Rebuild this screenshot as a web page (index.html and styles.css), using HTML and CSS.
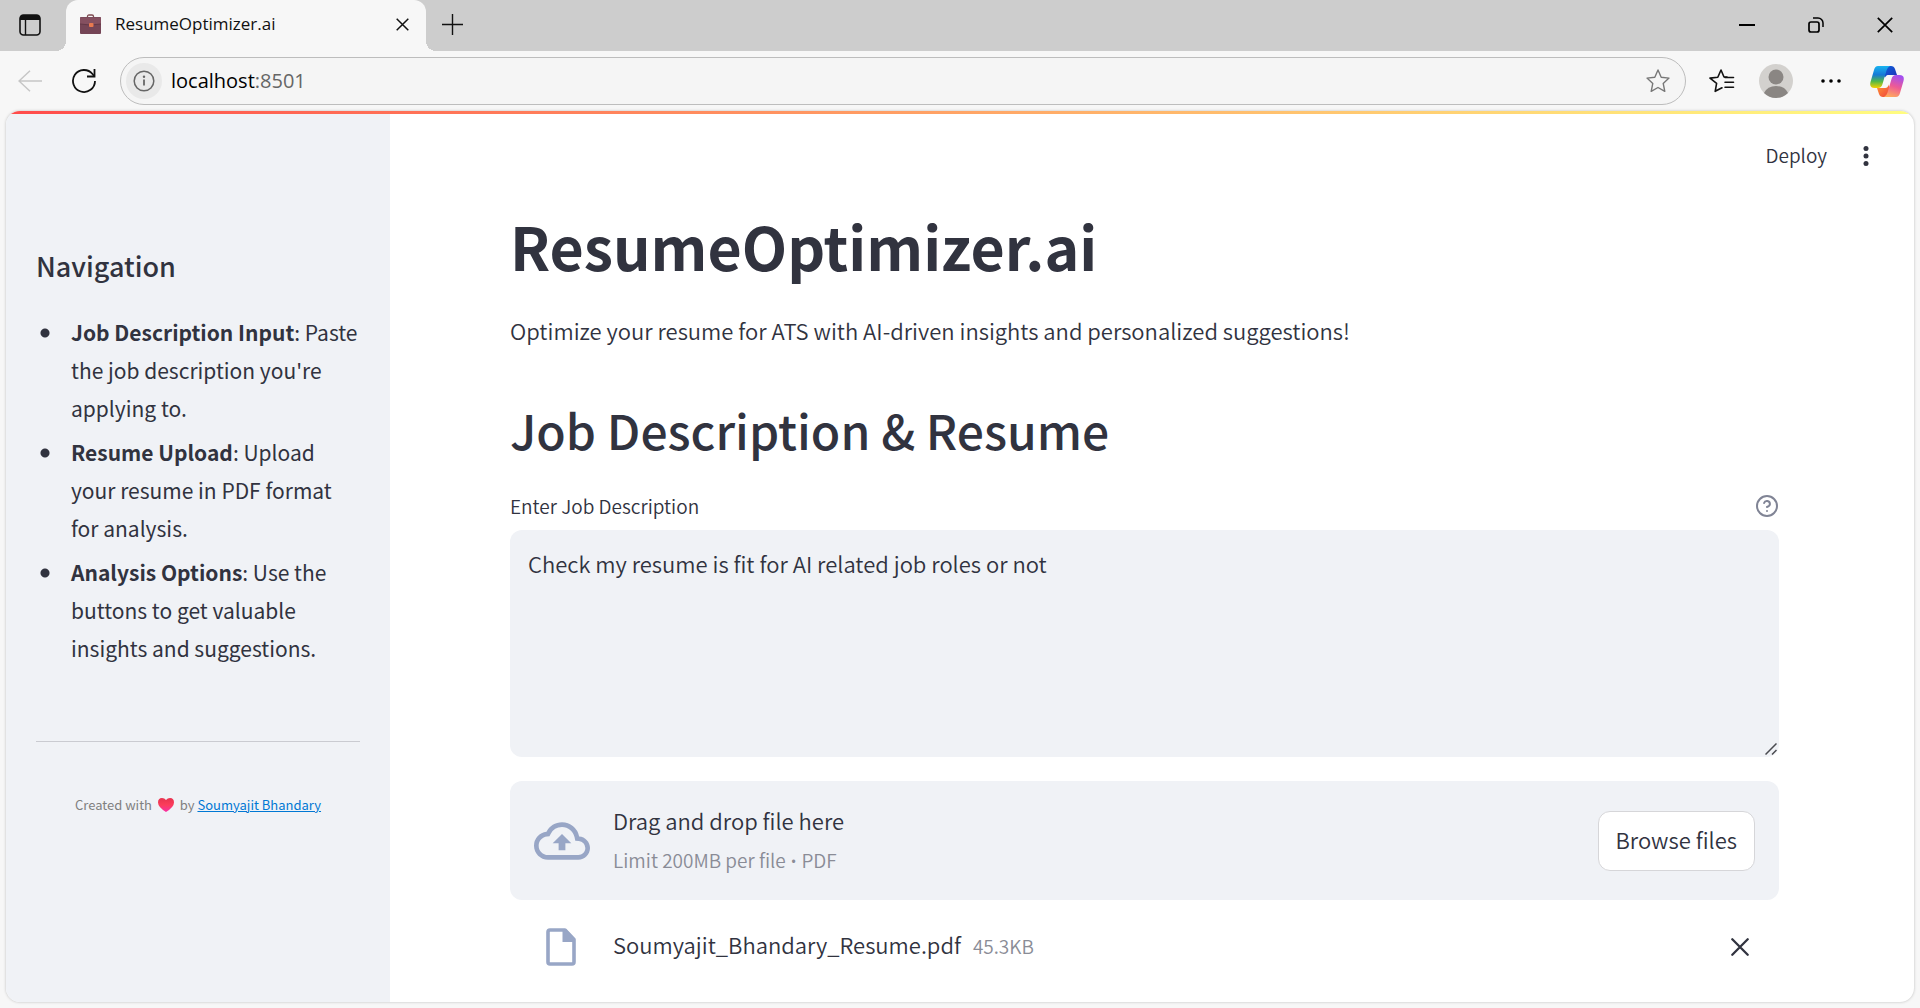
FILE: index.html
```html
<!DOCTYPE html>
<html lang="en">
<head>
<meta charset="utf-8">
<title>ResumeOptimizer.ai</title>
<link rel="stylesheet" href="styles.css">
</head>
<body>
<div class="browser">
  <div class="tabstrip">
    <button class="chrome-btn tab-actions" aria-label="Tab actions">
      <svg width="22" height="22" viewBox="0 0 22 22"><rect x="1" y="1" width="20" height="20" rx="3.5" fill="none" stroke="#111" stroke-width="1.6"/><path d="M1 6V4a3 3 0 0 1 3-3h14a3 3 0 0 1 3 3v2z" fill="#111"/><path d="M6.5 6v15" stroke="#111" stroke-width="1.4"/></svg>
    </button>
    <div class="tab">
      <svg class="favicon" width="21" height="20" viewBox="0 0 21 20"><path d="M7.500 4V2.500q0-1.500 1.500-1.500h3q1.500 0 1.500 1.500V4" fill="none" stroke="#7d4a50" stroke-width="1.300"/><rect y="3" width="21" height="17" rx="1" fill="#754556"/><path d="M0 3.500h21v6.500q-10 2-21 0z" fill="#855060"/><path d="M0 10q10.500 2 21 0" fill="none" stroke="#633847"/><rect x="9" y="9" width="4.500" height="4" rx="1" fill="#e87a50"/></svg>
      <span class="tab-title">ResumeOptimizer.ai</span>
      <button class="chrome-btn" aria-label="Close tab">
        <svg width="13" height="13" viewBox="0 0 13 13"><path d="M.7.7l11.600 11.600M12.300.7L.7 12.300" stroke="#111" stroke-width="1.500"/></svg>
      </button>
    </div>
    <button class="chrome-btn new-tab" aria-label="New tab">
      <svg width="21" height="21" viewBox="0 0 21 21"><path d="M10.500 0v21M0 10.500h21" stroke="#111" stroke-width="1.400"/></svg>
    </button>
    <div class="window-controls">
      <button class="chrome-btn" aria-label="Minimize"><svg width="16" height="16" viewBox="0 0 16 16"><path d="M0 8h16" stroke="#000" stroke-width="2"/></svg></button>
      <button class="chrome-btn" aria-label="Restore"><svg width="16" height="16" viewBox="0 0 16 16" fill="none" stroke="#000" stroke-width="1.700"><rect x="1" y="5" width="10" height="10" rx="2"/><path d="M5 1h5a5 5 0 0 1 5 5v4" stroke-width="1.500"/></svg></button>
      <button class="chrome-btn" aria-label="Close"><svg width="16" height="16" viewBox="0 0 16 16"><path d="M.8.8l14.400 14.400M15.200.8L.8 15.200" stroke="#000" stroke-width="1.700"/></svg></button>
    </div>
  </div>

  <div class="toolbar">
    <button class="chrome-btn" aria-label="Back"><svg width="24" height="22" viewBox="0 0 24 22" fill="none" stroke="#c6c6c6" stroke-width="1.500"><path d="M24 11H1M12 .7L1 11l11 10.300"/></svg></button>
    <button class="chrome-btn reload" aria-label="Reload"><svg width="24" height="24" viewBox="0 0 24 24" fill="none" stroke="#111" stroke-width="1.800"><path d="M23 12A11 11 0 1 1 20.500 5L22.500 7.500"/><path d="M22.500 0v7.500H15"/></svg></button>
    <div class="address">
      <button class="chrome-btn site-info" aria-label="Site information"><svg width="22" height="22" viewBox="0 0 22 22"><circle cx="11" cy="11" r="9.800" fill="none" stroke="#666" stroke-width="1.500"/><path d="M11 9.500v6" stroke="#666" stroke-width="1.800"/><circle cx="11" cy="6.800" r="1.200" fill="#666"/></svg></button>
      <span class="url">localhost<span class="port">:8501</span></span>
      <button class="chrome-btn" aria-label="Add to favorites"><svg width="24" height="24" viewBox="0 0 24 24" fill="none" stroke="#777" stroke-width="1.400" stroke-linejoin="round"><path d="M12 1l3.200 7.200 7.800.9-5.800 5.300 1.600 7.900L12 18.500l-6.800 3.800 1.600-7.900L1 9.100l7.800-.9z"/></svg></button>
    </div>
    <button class="chrome-btn favorites" aria-label="Favorites"><svg width="26" height="24" viewBox="0 0 26 24" fill="none" stroke="#111" stroke-width="1.600" stroke-linejoin="round" stroke-linecap="round"><path d="M13 18.800l-6.800 3.500 1.400-7.900L1 9.100l7.800-.9L12 1l3 7h3"/><path d="M16 8.500h8.500M16 13.300h8.500M16 18.200h8.500"/></svg></button>
    <button class="chrome-btn profile" aria-label="Profile"><svg width="34" height="34" viewBox="0 0 34 34"><circle cx="17" cy="17" r="17" fill="#d3d1ce"/><circle cx="17" cy="13" r="7.500" fill="#8a8683"/><path d="M5 29q3.500-7 12-7t12 7a17 17 0 0 1-24 0z" fill="#8a8683"/></svg></button>
    <button class="chrome-btn more" aria-label="Settings and more"><svg width="20" height="4" viewBox="0 0 20 4"><circle cx="2" cy="2" r="1.800"/><circle cx="10" cy="2" r="1.800"/><circle cx="18" cy="2" r="1.800"/></svg></button>
    <button class="chrome-btn copilot" aria-label="Copilot">
      <svg width="34" height="31" viewBox="0 0 34 31">
        <defs>
          <linearGradient id="cool" x1="0" y1="0" x2="0" y2="1"><stop offset="0" stop-color="#19b4f0"/><stop offset=".4" stop-color="#1578d6"/><stop offset=".7" stop-color="#52b848"/><stop offset="1" stop-color="#f5d000"/></linearGradient>
          <linearGradient id="warm" x1="0.600" y1="0" x2="0.300" y2="1"><stop offset="0" stop-color="#a34ff0"/><stop offset=".5" stop-color="#ee5a95"/><stop offset="1" stop-color="#ffab5c"/></linearGradient>
          <linearGradient id="blue" x1="0" y1="0" x2="1" y2="1"><stop offset="0" stop-color="#0d62dc"/><stop offset="1" stop-color="#1f2fb5"/></linearGradient>
          <linearGradient id="red" x1="0" y1="0" x2="1" y2="1"><stop offset="0" stop-color="#ff9a35"/><stop offset="1" stop-color="#f0413d"/></linearGradient>
        </defs>
        <path d="M17 0h4q3 0 4 3l2 6h-4q-4 0-5 3.500l-4-2z" fill="url(#blue)"/>
        <path d="M7 22h6q4 0 5-4l2 4-3 9h-4q-3 0-4-3z" fill="url(#red)"/>
        <path d="M8 0h12q-2.500 1-3.500 4.500L12.500 18q-1 4-4.500 4H4.500q-5.500 0-4-6L4 4q1-4 4-4z" fill="url(#cool)"/>
        <path d="M26 31H14q2.500-1 3.500-4.500L21.500 13q1-4 4.500-4h3.500q5.500 0 4 6L30 27q-1 4-4 4z" fill="url(#warm)"/>
        <path d="M17.500 9h5q-1.500 1.500-2 4l-2.300 7q-.7 2-3 2h-4q1.500-1 2-3.500L15 12q.5-2.500 2.500-3z" fill="#f7f7f7"/>
      </svg>
    </button>
  </div>

  <div class="page">
    <div class="decoration"></div>
    <aside class="sidebar">
      <h2 class="nav-title">Navigation</h2>
      <ul class="nav-list">
        <li><strong>Job Description Input</strong>: Paste the job description you're applying to.</li>
        <li><strong>Resume Upload</strong>: Upload your resume in PDF format for analysis.</li>
        <li><strong>Analysis Options</strong>: Use the buttons to get valuable insights and suggestions.</li>
      </ul>
      <hr class="divider">
      <p class="credit">Created with <svg class="heart" width="16" height="14" viewBox="0 0 16 14"><defs><linearGradient id="heart" x1="0" y1="0" x2="0" y2="1"><stop offset="0" stop-color="#e8334f"/><stop offset=".5" stop-color="#fb3d5b"/><stop offset="1" stop-color="#f92fa8"/></linearGradient></defs><path d="M8 14Q0 9 0 4.500 0 0 4 0q2.500 0 4 2 1.500-2 4-2 4 0 4 4.500Q16 9 8 14z" fill="url(#heart)"/></svg> by <a href="#">Soumyajit Bhandary</a></p>
    </aside>

    <main class="main">
      <header class="app-header">
        <button class="deploy">Deploy</button>
        <button class="chrome-btn" aria-label="Main menu"><svg width="6" height="20" viewBox="0 0 6 20" fill="#31333f"><circle cx="3" cy="2.600" r="2.500"/><circle cx="3" cy="10" r="2.500"/><circle cx="3" cy="17.400" r="2.500"/></svg></button>
      </header>
      <div class="content">
        <h1 class="title">ResumeOptimizer.ai</h1>
        <p class="intro">Optimize your resume for ATS with AI-driven insights and personalized suggestions!</p>
        <h2 class="section-title">Job Description &amp; Resume</h2>
        <div class="label-row">
          <label for="job">Enter Job Description</label>
          <button class="chrome-btn" aria-label="Help"><svg width="24" height="24" viewBox="0 0 24 24" fill="none" stroke="#808495" stroke-width="2" stroke-linecap="round" stroke-linejoin="round"><circle cx="12" cy="12" r="10"/><path d="M9.090 9a3 3 0 0 1 5.830 1c0 2-3 3-3 3"/><path d="M12 17h.01"/></svg></button>
        </div>
        <div class="job-field">
          <textarea class="job-input" id="job">Check my resume is fit for AI related job roles or not</textarea>
          <svg class="grip" width="12" height="12" viewBox="0 0 12 12"><path d="M.5 11.500l11-11M7 11.500l4.500-4.500" stroke="#4a4b50" stroke-width="1.500"/></svg>
        </div>
        <section class="dropzone">
          <svg class="cloud" width="56" height="56" viewBox="0 0 24 24" fill="#98a6c6"><path d="M19.350 10.040A7.490 7.490 0 0 0 12 4C9.110 4 6.600 5.640 5.350 8.040A5.994 5.994 0 0 0 0 14c0 3.310 2.690 6 6 6h13c2.760 0 5-2.240 5-5 0-2.640-2.050-4.780-4.650-4.960zM19 18H6c-2.210 0-4-1.790-4-4 0-2.050 1.530-3.760 3.560-3.970l1.070-.11.5-.95A5.469 5.469 0 0 1 12 6c2.620 0 4.880 1.860 5.390 4.430l.3 1.500 1.530.11A2.980 2.980 0 0 1 22 15c0 1.650-1.350 3-3 3zM8 13h2.550v3h2.900v-3H16l-4-4z"/></svg>
          <div class="drop-text">
            <span>Drag and drop file here</span>
            <span class="muted">Limit 200MB per file <span class="dot">•</span> PDF</span>
          </div>
          <button class="browse">Browse files</button>
        </section>
        <div class="file-row">
          <svg class="file-icon" width="30" height="38" viewBox="0 0 30 38"><path d="M2 4q0-2 2-2h15l9 9.500V34q0 2-2 2H4q-2 0-2-2z" fill="none" stroke="#98a6c6" stroke-width="3.600" stroke-linejoin="round"/><path d="M16.500 1H20l9 10v3H16.500z" fill="#98a6c6"/></svg>
          <div class="file-info">
            <span>Soumyajit_Bhandary_Resume.pdf</span>
            <span class="muted">45.3KB</span>
          </div>
          <button class="chrome-btn" aria-label="Remove file"><svg width="18" height="18" viewBox="0 0 18 18"><path d="M1.300 1.300l15.400 15.400M16.700 1.300L1.300 16.700" stroke="#31333f" stroke-width="2.300" stroke-linecap="round"/></svg></button>
        </div>
      </div>
    </main>
  </div>
</div>
</body>
</html>
```
FILE: styles.css
```css
* {
  box-sizing: border-box;
}

body {
  margin: 0;
  color: #31333f;
  background: #f7f7f7;
  font-family: "Noto Sans CJK SC", "Noto Sans", sans-serif;
  font-size: 22px;
  font-weight: 350;
  line-height: 38px;
}

h1,
h2,
p,
ul {
  margin: 0;
}

button,
textarea {
  color: inherit;
  font: inherit;
}

svg {
  display: block;
  flex: none;
}

.browser {
  display: flex;
  flex-direction: column;
  min-height: 100vh;
}

.chrome-btn {
  display: flex;
  align-items: center;
  justify-content: center;
  padding: 0;
  border: 0;
  background: none;
}

/* Tab strip */
.tabstrip {
  display: flex;
  align-items: center;
  height: 51px;
  padding-bottom: 2px;
  background: #cdcdcd;
  font-family: "Open Sans", "Noto Sans", sans-serif;
  font-weight: 400;
}

.tab-actions {
  width: 60px;
  margin-right: 6px;
}

.tab {
  position: relative;
  display: flex;
  align-items: center;
  align-self: flex-start;
  width: 360px;
  height: 51px;
  padding: 0 17px 3px 14px;
  border-radius: 12px 12px 0 0;
  background: #f7f7f7;
  color: #111;
  font-size: 17px;
}

.tab::before,
.tab::after {
  content: "";
  position: absolute;
  bottom: 0;
  width: 10px;
  height: 10px;
}

.tab::before {
  right: 100%;
  background: radial-gradient(circle at 0 0, #cdcdcd 10px, #f7f7f7 10px);
}

.tab::after {
  left: 100%;
  background: radial-gradient(circle at 100% 0, #cdcdcd 10px, #f7f7f7 10px);
}

.tab-title {
  flex: 1;
  margin-left: 14px;
}

.new-tab {
  margin-left: 16px;
}

.window-controls {
  display: flex;
  gap: 53px;
  margin-left: auto;
  margin-right: 27px;
}

/* Address bar */
.toolbar {
  display: flex;
  align-items: center;
  height: 60px;
  padding: 0 16px 0 18px;
  background: #f7f7f7;
  font-family: "Open Sans", "Noto Sans", sans-serif;
  font-weight: 400;
}

.reload {
  margin: 0 24px 0 30px;
}

.address {
  display: flex;
  flex: 1;
  align-items: center;
  height: 48px;
  padding: 0 15px 0 5px;
  border: 1px solid #bdbdbd;
  border-radius: 24px;
  background: #f5f5f5;
}

.site-info {
  width: 36px;
  height: 36px;
  border-radius: 50%;
  background: #e9e9e9;
}

.url {
  flex: 1;
  margin-left: 9px;
  color: #000;
  font-size: 20px;
}

.port {
  color: #666;
}

.favorites {
  margin-left: 23px;
}

.profile {
  margin-left: 24px;
}

.more {
  margin: 0 29px 0 28px;
}

/* Page frame */
.page {
  position: relative;
  display: flex;
  flex: 1;
  margin: 0 6px 6px;
  border-radius: 14px;
  overflow: hidden;
  background: #fff;
  box-shadow: 0 0 3px #bbb;
}

.decoration {
  position: absolute;
  inset: 0 0 auto;
  height: 3px;
  background: linear-gradient(90deg, #ff4b4b, #fffd80);
}

/* Sidebar */
.sidebar {
  flex: none;
  width: 384px;
  padding: 135px 30px 30px;
  background: #f0f2f6;
}

.nav-title {
  font-size: 27px;
  font-weight: 500;
  line-height: 40px;
}

.nav-list {
  margin-top: 27px;
  padding: 0;
  list-style: none;
  font-size: 21px;
  font-weight: 400;
}

.nav-list li {
  margin-bottom: 6px;
  padding-left: 35px;
  background: radial-gradient(circle at 9px 20px, #31333f 4px, transparent 5px);
}

.nav-list strong {
  font-weight: 700;
}

.divider {
  height: 1px;
  margin: 74px 0 47px;
  border: 0;
  background: #cacbd1;
}

.credit {
  color: #808080;
  font-size: 13px;
  font-weight: 400;
  line-height: 32px;
  text-align: center;
}

.credit a {
  color: #0078d4;
}

.heart {
  display: inline-block;
  margin: 0 3px;
  vertical-align: -2px;
}

/* Main column */
.main {
  flex: 1;
  min-width: 0;
}

.app-header {
  display: flex;
  align-items: center;
  justify-content: flex-end;
  gap: 36px;
  height: 90px;
  padding-right: 45px;
}

.deploy {
  padding: 0 0 2px;
  border: 0;
  background: none;
  font-size: 19px;
}

.content {
  display: flex;
  flex-direction: column;
  padding: 5px 135px 24px 120px;
}

.title {
  font-size: 59px;
  font-weight: 700;
  line-height: 80px;
}

.intro {
  margin-top: 25px;
}

.section-title {
  margin-top: 47px;
  font-size: 48px;
  font-weight: 500;
  line-height: 66px;
}

.label-row {
  display: flex;
  align-items: center;
  justify-content: space-between;
  height: 32px;
  margin: 28px 0 8px;
  font-size: 19px;
}

.job-field {
  position: relative;
  display: flex;
}

.job-input {
  width: 100%;
  height: 227px;
  padding: 14px 18px;
  border: 0;
  border-radius: 12px;
  outline: 0;
  background: #f0f2f6;
  resize: vertical;
}

.job-input::-webkit-resizer {
  background: transparent;
}

.grip {
  position: absolute;
  right: 2px;
  bottom: 2px;
  pointer-events: none;
}

.dropzone {
  display: flex;
  align-items: center;
  margin-top: 24px;
  padding: 20px 24px;
  min-height: 119px;
  border-radius: 12px;
  background: #f0f2f6;
}

.drop-text {
  display: flex;
  flex: 1;
  flex-direction: column;
  gap: 2px;
  margin-left: 23px;
}

.muted {
  color: #8a8c96;
  font-size: 19px;
}

.dot {
  font-family: "Noto Sans", sans-serif;
}

.browse {
  height: 60px;
  padding: 0 17px 4px;
  border: 1px solid #d6d6d9;
  border-radius: 12px;
  background: #fff;
}

.file-row {
  display: flex;
  align-items: center;
  margin-top: 24px;
  padding: 0 30px 0 36px;
  height: 46px;
}

.file-info {
  display: flex;
  flex: 1;
  align-items: baseline;
  gap: 12px;
  margin-left: 37px;
  padding-bottom: 4px;
}
```
